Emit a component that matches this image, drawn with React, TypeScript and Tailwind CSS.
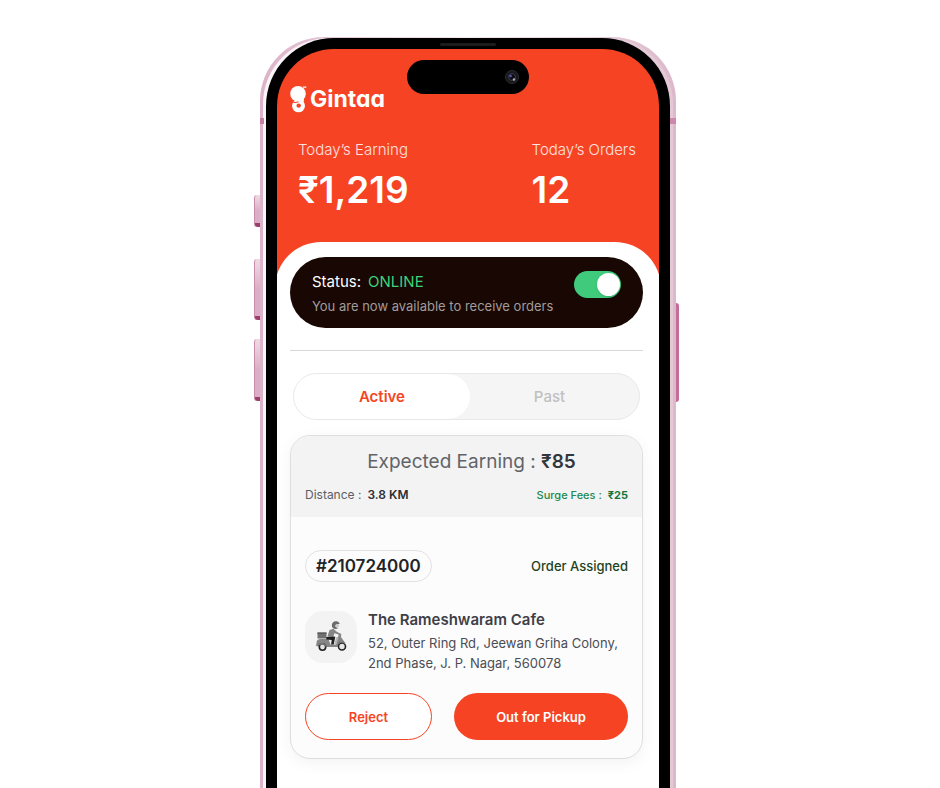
import { useState } from "react";

function LogoMark() {
  return (
    <svg viewBox="0 0 17 28" className="h-7 w-[17px]" aria-hidden="true">
      <circle cx="8" cy="8.800" r="7.800" fill="#fff" />
      <path d="M12.500 1.500h3.800v1.300h-3z" fill="#fff" />
      <path d="M6 15.500c3 0 5.500-1.500 8-4 .3 2.500-.2 5-1.200 6.500l-7-.5z" fill="#fff" />
      <circle cx="8.500" cy="20.800" r="6.500" fill="#fff" />
      <circle cx="8.700" cy="20.600" r="2.200" fill="#f54323" />
      <path d="M1.500 16.600c2 1 4.500 1.200 7 .2" fill="none" stroke="#f54323" strokeWidth="1.100" />
    </svg>
  );
}

function Scooter() {
  return (
    <svg viewBox="0 0 32 32" className="size-8" aria-hidden="true">
      <path d="M16.800 4.500c0-3 2.200-4.500 4.400-4.300 1.900.1 3.100 1.200 3.500 2.800l-3.900.5-.6 1.900 2.800 1.800c-2.500 1.600-6.200.6-6.200-2.700z" fill="#6b6b6b" />
      <path d="M21 3.700l3 .1-.3 2.600-1.800.2-1.300-1.300z" fill="#cdcdcd" />
      <path d="M14.500 9l4-1.300 3 2.800 3.500 2-.6 1.200-5-1.400-1 3.200h-6z" fill="#858585" />
      <path d="M2.500 11.500h9v6h-9z" fill="#707070" />
      <path d="M2.500 11.500h9V13h-9z" fill="#5a5a5a" />
      <path d="M1.500 22c0-2.500 1.500-4 4-4h8l2 5.500h5.500l3-11.300 2.300.6-.3 3.200 3.500 5-5 1.500-2 3.500H6.500L1 25z" fill="#868686" />
      <path d="M11 16.200c3-.9 6.300-1 9.300-.4l-1.600 7.700h-2.600l.6-4.500-5.200-.4z" fill="#1f1f1f" />
      <path d="M21 16.500l2.500-1-2 7.500h-2z" fill="#b5b5b5" />
      <circle cx="7.500" cy="26" r="3.200" fill="#e2e2e2" stroke="#222" strokeWidth="1.600" />
      <circle cx="27" cy="25.500" r="3.500" fill="#e8e8e8" stroke="#222" strokeWidth="1.600" />
      <path d="M3 22.500c3-1.600 7-1 9 2.500l-1 1c-2-2.500-5-3-8-1z" fill="#777" />
      <path d="M23.500 22.500c2-2 5-1.700 6.500 0" fill="none" stroke="#777" strokeWidth="1.500" />
    </svg>
  );
}

function SideKey({ className }: { className: string }) {
  return (
    <span
      className={`absolute -left-1.5 w-1.5 rounded-l-[3px] border-l border-[#c98bab] bg-linear-to-b from-[#efdbe5] via-[#dcadc6] to-[#dcadc6] ${className}`}
    >
      <span className="absolute bottom-0 left-0 h-1 w-full rounded-bl-[3px] bg-[#9c3e6d]" />
    </span>
  );
}

function Stat({ label, value }: { label: string; value: string }) {
  return (
    <div>
      <p className="text-[15px] leading-5 font-light text-white/85">{label}</p>
      <p className="mt-2 text-[37px] leading-[44px] font-semibold">{value}</p>
    </div>
  );
}

export default function App() {
  const [online, setOnline] = useState(true);
  const [tab, setTab] = useState("active");

  return (
    <main className="flex min-h-screen justify-center overflow-hidden bg-white pt-[37px] pr-1 font-['Inter','Noto_Sans',sans-serif]">
      <div className="relative flex w-full max-w-[416px] rounded-t-[64px] bg-linear-to-r from-[#dcb3c8] via-[#f4e9ef] to-[#dcb9ca] px-[3px] pt-px">
        <SideKey className="top-[158px] h-8" />
        <SideKey className="top-[222px] h-[61px]" />
        <SideKey className="top-[302px] h-[62px]" />
        <span className="absolute top-[266px] -right-[3px] h-[99px] w-[3px] rounded-r-sm bg-[#c46c9a]" />
        <span className="absolute top-[81px] left-0 h-1.5 w-1 bg-[#c57fa6]" />

        <div className="flex w-full rounded-t-[66px] bg-linear-to-r from-[#fbf7f9] to-[#e4c8d5] px-[3px]">
          <div className="flex w-full rounded-t-[68px] bg-black px-[11px] pt-[11px]">
            <div className="relative flex w-full flex-col overflow-hidden rounded-t-[57px] bg-[#f54323]">
              <span className="absolute top-[11px] left-[130px] flex h-[34px] w-[122px] items-center justify-end rounded-full bg-black pr-2.5">
                <svg viewBox="0 0 14 14" className="size-3.5" aria-hidden="true">
                  <circle cx="7" cy="7" r="6.500" fill="#17171c" stroke="#2c2c30" />
                  <circle cx="7" cy="7" r="3.500" fill="#0c0c18" stroke="#3b3b45" />
                  <circle cx="5.500" cy="6" r="1.300" fill="#5756a8" />
                  <circle cx="9" cy="9.500" r="1.300" fill="#a9a9b4" />
                </svg>
              </span>

              <header className="px-[13px] pt-9 pb-[30px] text-white">
                <div className="flex h-7 items-center gap-[3px]">
                  <LogoMark />
                  <span className="text-[23px] leading-6 font-bold [font-feature-settings:'cv11']">Gintaa</span>
                </div>
                <div className="mt-[27px] flex justify-between pr-2.5 pl-2">
                  <Stat label="Today’s Earning" value="₹1,219" />
                  <Stat label="Today’s Orders" value="12" />
                </div>
              </header>

              <div className="-mx-0.5 grow rounded-t-[46px] bg-white pt-[15px] pr-[18px] pl-[15px]">
                <section className="flex items-start justify-between rounded-[36px] bg-[#180703] px-[22px] pt-3.5 pb-3">
                  <div className="pt-px">
                    <p className="text-[15px] leading-5 text-white">
                      Status:<span className="ml-[7px] text-[#3bd478]">ONLINE</span>
                    </p>
                    <p className="mt-1 text-[13px] leading-5 text-[#a19c9a]">You are now available to receive orders</p>
                  </div>
                  <label className="relative flex">
                    <input
                      type="checkbox"
                      role="switch"
                      aria-label="Available for orders"
                      checked={online}
                      onChange={(e) => setOnline(e.target.checked)}
                      className="peer h-[27px] w-[47px] appearance-none rounded-full bg-gray-500 checked:bg-[#40cb7c]"
                    />
                    <span className="pointer-events-none absolute top-0.5 left-0.5 size-[23px] rounded-full bg-white shadow peer-checked:left-[23px]" />
                  </label>
                </section>

                <hr className="mt-[22px] border-[#d8d8d8]" />

                <div
                  role="tablist"
                  className="mx-[3px] mt-[22px] flex h-[47px] rounded-full border border-[#e8e8e8] bg-[#f5f5f5]"
                >
                  <button
                    role="tab"
                    aria-selected={tab === "active"}
                    onClick={() => setTab("active")}
                    className="w-[51%] rounded-full pt-0.5 text-[15px] font-medium text-[#c0c0c0] aria-selected:bg-white aria-selected:font-semibold aria-selected:text-[#f54323]"
                  >
                    Active
                  </button>
                  <button
                    role="tab"
                    aria-selected={tab === "past"}
                    onClick={() => setTab("past")}
                    className="w-[49%] rounded-full pt-0.5 pr-2.5 text-[15px] font-medium text-[#c0c0c0] aria-selected:bg-white aria-selected:font-semibold aria-selected:text-[#f54323]"
                  >
                    Past
                  </button>
                </div>

                <article className="mt-[15px] overflow-hidden rounded-[20px] border border-[#dedede] bg-[#fcfcfc] shadow-[0_4px_16px_rgba(0,0,0,0.05)]">
                  <div className="bg-[#f3f3f3] px-3.5 pt-3.5 pb-3.5">
                    <p className="pl-2.5 text-center text-[19px] leading-6 text-[#62646a]">
                      Expected Earning : <span className="font-semibold text-[#34363d]">₹85</span>
                    </p>
                    <div className="mt-[13px] flex justify-between leading-4">
                      <p className="text-[12px] text-[#5c5e64]">
                        Distance :<span className="ml-1.5 font-semibold text-[#2c2e34]">3.8 KM</span>
                      </p>
                      <p className="text-[11px] font-medium text-[#228a4e]">
                        Surge Fees :<span className="ml-1.5 font-bold text-[#137638]">₹25</span>
                      </p>
                    </div>
                  </div>

                  <div className="px-3.5 pt-[33px] pb-[18px]">
                    <div className="flex items-center justify-between">
                      <p className="flex h-8 items-center rounded-full border border-[#e2e2e2] px-2.5 pt-0.5 text-[17px] font-semibold text-[#222327]">
                        #210724000
                      </p>
                      <p className="text-[13px] leading-5 font-medium text-[#1d4321]">Order Assigned</p>
                    </div>

                    <div className="mt-[29px] flex items-start gap-[11px]">
                      <div className="flex size-[52px] shrink-0 items-center justify-center rounded-[18px] bg-[#f3f3f3]">
                        <Scooter />
                      </div>
                      <div>
                        <h2 className="text-[15px] leading-[18px] font-semibold text-[#3e4048]">The Rameshwaram Cafe</h2>
                        <p className="mt-1 text-[13px] leading-5 text-[#4b4d55]">
                          52, Outer Ring Rd, Jeewan Griha Colony, 2nd Phase, J. P. Nagar, 560078
                        </p>
                      </div>
                    </div>

                    <div className="mt-5 flex gap-[22px]">
                      <button className="h-[47px] w-[127px] rounded-full border border-[#f54323] bg-white pt-0.5 text-[13px] font-semibold text-[#f54323]">
                        Reject
                      </button>
                      <button className="h-[47px] flex-1 rounded-full bg-[#f54323] pt-0.5 text-[13px] font-semibold text-white">
                        Out for Pickup
                      </button>
                    </div>
                  </div>
                </article>
              </div>
            </div>
          </div>
        </div>
        <span className="absolute top-[81px] right-0 h-1.5 w-1.5 bg-[#cf86ac]" />
        <span className="absolute top-1.5 left-1/2 h-[3px] w-14 -translate-x-1/2 rounded-full bg-[#1c1c1c]" />
      </div>
    </main>
  );
}
